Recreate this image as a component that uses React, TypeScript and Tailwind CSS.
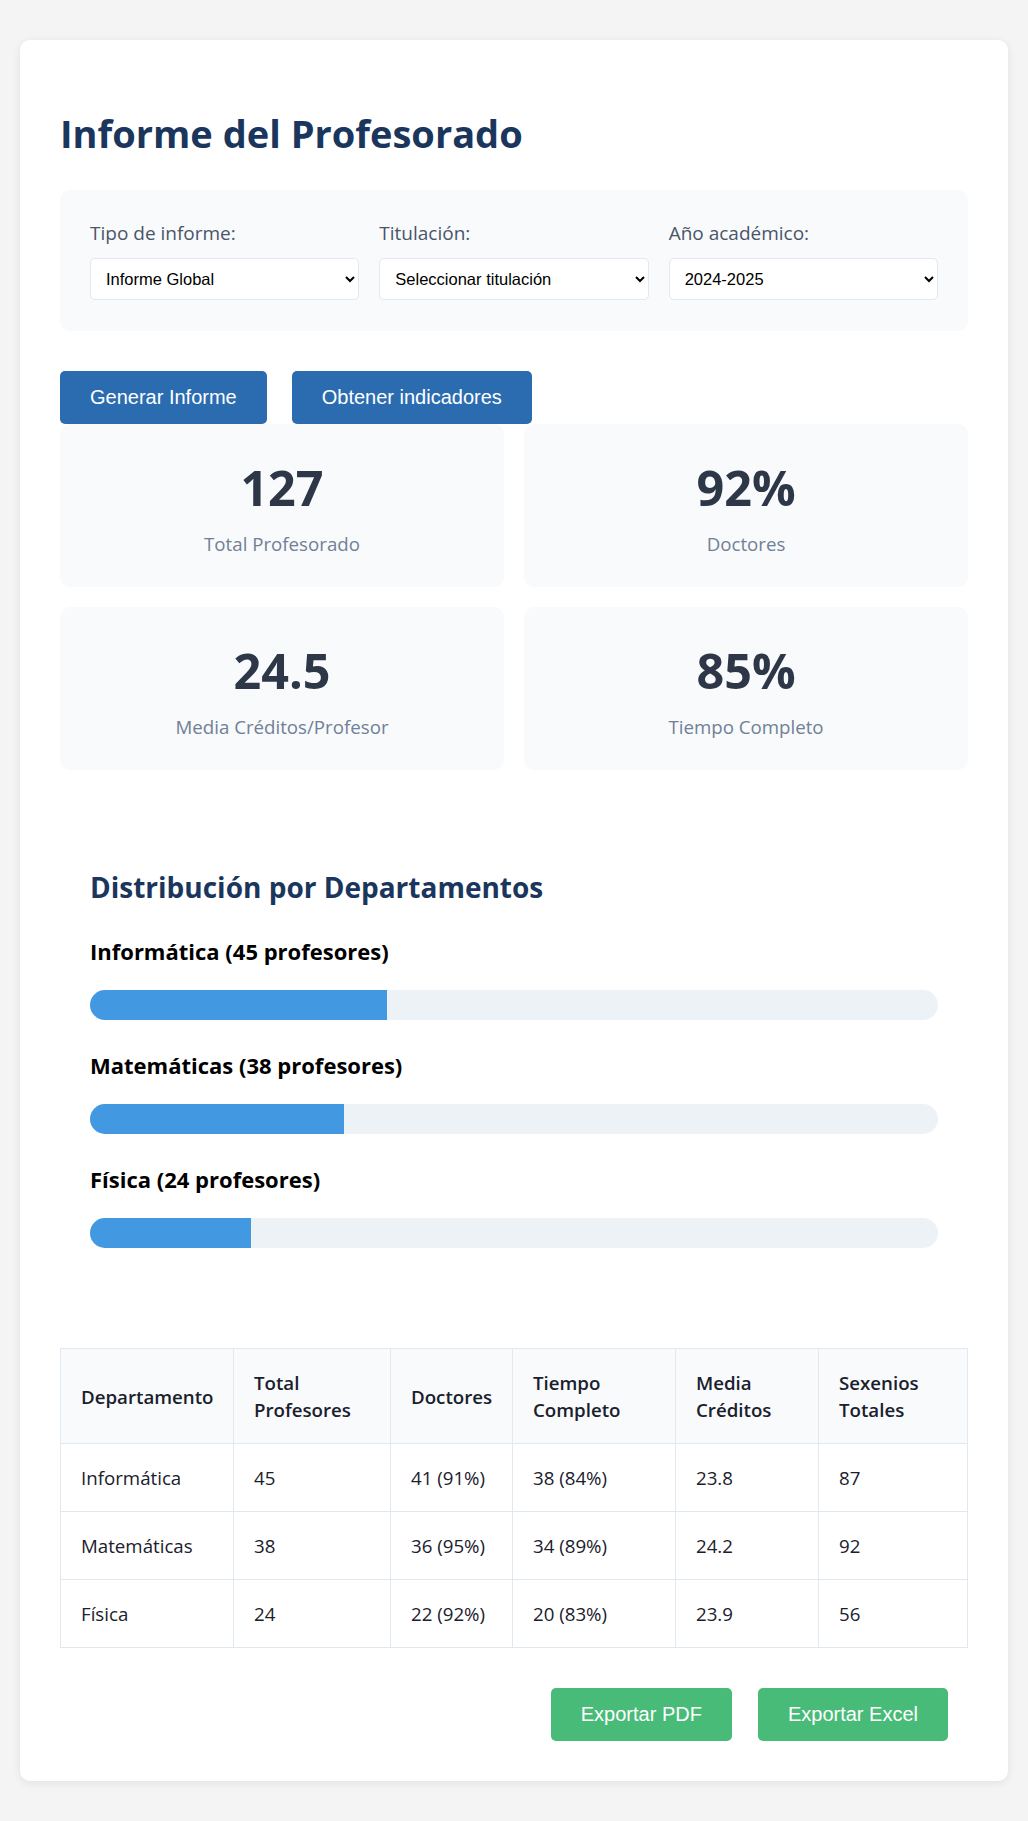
import React from 'react';

interface Department {
  name: string;
  total: number;
  doctors: string;
  fullTime: string;
  credits: string;
  sexenios: number;
  percent: number;
}

const departments: Department[] = [
  { name: 'Informática', total: 45, doctors: '41 (91%)', fullTime: '38 (84%)', credits: '23.8', sexenios: 87, percent: 35 },
  { name: 'Matemáticas', total: 38, doctors: '36 (95%)', fullTime: '34 (89%)', credits: '24.2', sexenios: 92, percent: 30 },
  { name: 'Física', total: 24, doctors: '22 (92%)', fullTime: '20 (83%)', credits: '23.9', sexenios: 56, percent: 19 },
];

const stats = [
  { value: '127', label: 'Total Profesorado' },
  { value: '92%', label: 'Doctores' },
  { value: '24.5', label: 'Media Créditos/Profesor' },
  { value: '85%', label: 'Tiempo Completo' },
];

const App: React.FC = () => {
  return (
    <div className="min-h-screen bg-[#f4f4f4] px-5 py-10 font-['Segoe_UI','Open_Sans',sans-serif]">
      <div className="bg-white rounded-[10px] shadow-[0_2px_10px_rgba(0,0,0,0.08)] p-10">
        <h1 className="text-[38px] leading-[53px] font-bold text-[#1a365d] mt-[27px] mb-[30px]">
          Informe del Profesorado
        </h1>

        {/* Filtros */}
        <div className="grid grid-cols-3 gap-5 p-[30px] pb-[31px] bg-[#f8fafc] rounded-[10px]">
          <div>
            <label className="block text-[19px] leading-[27px] text-[#4a5568] mb-[11px]">Tipo de informe:</label>
            <select className="w-full h-[42px] px-[11px] border border-[#e2e8f0] rounded-[5px] bg-white text-[16.5px] text-black font-['Liberation_Sans',Arial,sans-serif]">
              <option>Informe Global</option>
              <option>Informe por Departamento</option>
            </select>
          </div>
          <div>
            <label className="block text-[19px] leading-[27px] text-[#4a5568] mb-[11px]">Titulación:</label>
            <select className="w-full h-[42px] px-[11px] border border-[#e2e8f0] rounded-[5px] bg-white text-[16.5px] text-black font-['Liberation_Sans',Arial,sans-serif]">
              <option>Seleccionar titulación</option>
            </select>
          </div>
          <div>
            <label className="block text-[19px] leading-[27px] text-[#4a5568] mb-[11px]">Año académico:</label>
            <select className="w-full h-[42px] px-[11px] border border-[#e2e8f0] rounded-[5px] bg-white text-[16.5px] text-black font-['Liberation_Sans',Arial,sans-serif]">
              <option>2024-2025</option>
              <option>2023-2024</option>
            </select>
          </div>
        </div>

        {/* Acciones */}
        <div className="flex gap-[25px] mt-10">
          <button className="px-[30px] py-[15px] bg-[#2b6cb0] text-white text-[20px] leading-[23px] rounded-[5px] font-['Liberation_Sans',Arial,sans-serif]">
            Generar Informe
          </button>
          <button className="px-[30px] py-[15px] bg-[#2b6cb0] text-white text-[20px] leading-[23px] rounded-[5px] font-['Liberation_Sans',Arial,sans-serif]">
            Obtener indicadores
          </button>
        </div>

        {/* Indicadores */}
        <div className="grid grid-cols-2 gap-5">
          {stats.map((s) => (
            <div key={s.label} className="bg-[#f8fafc] rounded-[10px] p-[30px] text-center">
              <div className="text-[48.5px] leading-[66px] font-bold text-[#2d3748] mb-[10px]">{s.value}</div>
              <div className="text-[18.7px] leading-[27px] text-[#718096]">{s.label}</div>
            </div>
          ))}
        </div>

        {/* Distribución */}
        <div className="mt-10 p-[30px]">
          <h2 className="text-[28px] leading-[40px] font-bold text-[#1a365d] mt-[27px] mb-[31px]">
            Distribución por Departamentos
          </h2>
          <div className="flex flex-col gap-[32px]">
            {departments.map((d) => (
              <div key={d.name}>
                <div className="text-[22px] leading-[27px] font-bold text-black mb-[25px]">
                  {d.name} ({d.total} profesores)
                </div>
                <div className="h-[30px] w-full rounded-full bg-[#edf2f7] overflow-hidden">
                  <div className="h-full bg-[#4299e1]" style={{ width: `${d.percent}%` }} />
                </div>
              </div>
            ))}
          </div>
        </div>

        {/* Tabla */}
        <table className="w-full table-fixed border-collapse mt-[70px] text-[18.7px] leading-[27px]">
          <thead>
            <tr className="bg-[#f8fafc] text-[#1a202c]">
              <th className="w-[173px] p-5 border border-[#e2e8f0] text-left font-semibold">Departamento</th>
              <th className="w-[157px] p-5 border border-[#e2e8f0] text-left font-semibold">Total Profesores</th>
              <th className="w-[122px] p-5 border border-[#e2e8f0] text-left font-semibold">Doctores</th>
              <th className="w-[163px] p-5 border border-[#e2e8f0] text-left font-semibold">Tiempo Completo</th>
              <th className="w-[143px] p-5 border border-[#e2e8f0] text-left font-semibold">Media Créditos</th>
              <th className="p-5 border border-[#e2e8f0] text-left font-semibold">Sexenios Totales</th>
            </tr>
          </thead>
          <tbody className="text-[#1a202c]">
            {departments.map((d) => (
              <tr key={d.name}>
                <td className="p-5 border border-[#e2e8f0]">{d.name}</td>
                <td className="p-5 border border-[#e2e8f0]">{d.total}</td>
                <td className="p-5 border border-[#e2e8f0]">{d.doctors}</td>
                <td className="p-5 border border-[#e2e8f0]">{d.fullTime}</td>
                <td className="p-5 border border-[#e2e8f0]">{d.credits}</td>
                <td className="p-5 border border-[#e2e8f0]">{d.sexenios}</td>
              </tr>
            ))}
          </tbody>
        </table>

        {/* Exportar */}
        <div className="flex justify-end gap-[26px] mt-10 mr-5">
          <button className="px-[30px] py-[15px] bg-[#48bb78] text-white text-[20px] leading-[23px] rounded-[5px] font-['Liberation_Sans',Arial,sans-serif]">
            Exportar PDF
          </button>
          <button className="px-[30px] py-[15px] bg-[#48bb78] text-white text-[20px] leading-[23px] rounded-[5px] font-['Liberation_Sans',Arial,sans-serif]">
            Exportar Excel
          </button>
        </div>
      </div>
    </div>
  );
};

export default App;
